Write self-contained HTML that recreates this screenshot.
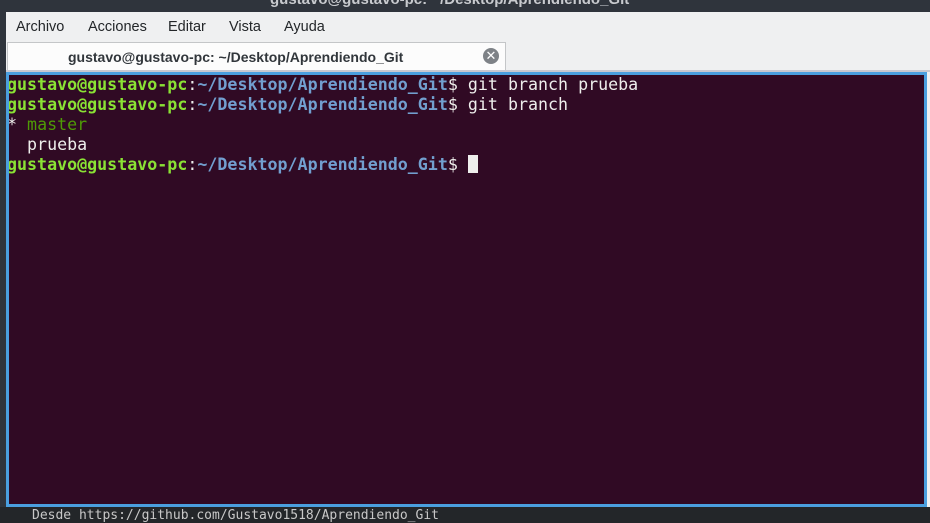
<!DOCTYPE html>
<html><head><style>
body{margin:0;width:930px;height:517px;overflow:hidden;background:#232629;position:relative;font-family:"Liberation Sans","DejaVu Sans",sans-serif}
.title{position:absolute;left:0;top:0;width:930px;height:12px;background:#2f343c;overflow:hidden}
.title span{position:absolute;left:270px;top:-9px;color:#c8cace;font-weight:bold;font-size:15px}
.menu{position:absolute;left:6px;top:12px;width:924px;height:60px;background:#eff0f1}
.menu div{position:absolute;top:7px;font-size:14.5px;color:#232629}
.tab{position:absolute;left:7px;top:42px;width:499px;height:28px;background:#fcfcfc;border:1px solid #c4c6c8;border-bottom:none;box-sizing:border-box}
.tab span{position:absolute;left:60px;top:6px;font-size:14px;font-weight:bold;color:#31363b}
.x{position:absolute;left:475px;top:5px;width:16px;height:16px;border-radius:50%;background:#7e8287;color:#fff;font-size:13px;line-height:16px;text-align:center}
.line{position:absolute;left:6px;top:70px;width:924px;height:2px;background:#c8c8d0}
.term{position:absolute;left:6px;top:72px;width:921px;height:435px;box-sizing:border-box;border:3px solid #4a9fdf;background:#300a24;overflow:hidden}
.rstrip{position:absolute;left:927px;top:72px;width:3px;height:435px;background:#eff0f1}
pre{margin:0;position:absolute;left:-2px;top:0px;font-family:"DejaVu Sans Mono","Liberation Mono",monospace;font-size:16.65px;line-height:20px;color:#eeeeec}
.g{color:#8ae234;font-weight:bold}.b{color:#729fcf;font-weight:bold}.m{color:#4e9a06}
.cur{display:inline-block;width:10px;height:18px;background:#eeeeec;vertical-align:-3px}
.foot{position:absolute;left:32px;top:508px;color:#c8c8c8;font-size:13px;font-family:"DejaVu Sans Mono",monospace}
.lstrip{position:absolute;left:0;top:12px;width:6px;height:495px;background:#2f343c}
</style></head><body>
<div class="title"><span>gustavo@gustavo-pc: ~/Desktop/Aprendiendo_Git</span></div>
<div class="lstrip"></div>
<div class="menu">
<div style="left:10px">Archivo</div><div style="left:82px">Acciones</div><div style="left:162px">Editar</div><div style="left:223px">Vista</div><div style="left:278px">Ayuda</div>
</div>
<div class="tab"><span>gustavo@gustavo-pc: ~/Desktop/Aprendiendo_Git</span><div class="x">✕</div></div>
<div class="line"></div>
<div class="foot">Desde https://github.com/Gustavo1518/Aprendiendo_Git</div>
<div class="term"><pre><span class="g">gustavo@gustavo-pc</span>:<span class="b">~/Desktop/Aprendiendo_Git</span>$ git branch prueba
<span class="g">gustavo@gustavo-pc</span>:<span class="b">~/Desktop/Aprendiendo_Git</span>$ git branch
* <span class="m">master</span>
  prueba
<span class="g">gustavo@gustavo-pc</span>:<span class="b">~/Desktop/Aprendiendo_Git</span>$ <span class="cur"></span></pre></div>
<div class="rstrip"></div>
</body></html>
